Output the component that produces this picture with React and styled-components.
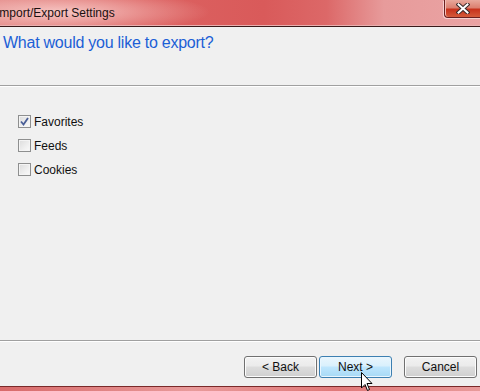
import styled, { createGlobalStyle } from 'styled-components';

const Global = createGlobalStyle`
    html, body {
        margin: 0;
        padding: 0;
        background: #f0f0f0;
    }
    body {
        font-family: "Liberation Sans", Arial, sans-serif;
        overflow: hidden;
    }
`;

const Window = styled.div`
    position: relative;
    width: 480px;
    height: 391px;
    display: flex;
    flex-direction: column;
    background: #f0f0f0;
    overflow: hidden;
`;

const TitleBar = styled.div`
    height: 26px;
    flex: none;
    display: flex;
    align-items: flex-start;
    justify-content: space-between;
    border-bottom: 1px solid #3a1a1a;
    box-shadow: inset 0 -1px 0 #e9b0b0;
    background:
        radial-gradient(ellipse 150px 22px at 60px 12px, rgba(255, 225, 222, 0.75), rgba(255, 225, 222, 0) 100%),
        linear-gradient(90deg, #e07e7c 0%, #dc6261 30%, #d95a5a 55%, #dc6868 68%, #e79b9b 80%, #eaa3a3 100%);
`;

const Title = styled.span`
    margin: 6px 0 0 -4px;
    font-size: 12px;
    color: #1a1010;
    white-space: nowrap;
`;

const CloseButton = styled.div`
    width: 36px;
    height: 17px;
    margin-right: -1px;
    display: flex;
    align-items: center;
    justify-content: center;
    border: 1px solid #6a2020;
    border-top: none;
    border-right: none;
    border-radius: 0 0 0 4px;
    box-shadow: inset 1px 0 0 #f4c0b8, -1px 1px 0 #f6d0d0;
    background: linear-gradient(180deg, #e8a89c 0%, #dc8070 45%, #c8321c 55%, #d45a3a 100%);
`;

const Header = styled.div`
    height: 59px;
    flex: none;
    padding: 7px 0 0 3px;
    box-sizing: border-box;
    border-bottom: 1px solid #a0a0a0;
`;

const Heading = styled.h1`
    margin: 0;
    font-weight: normal;
    font-size: 16px;
    letter-spacing: -0.25px;
    color: #1c5fd6;
`;

const Body = styled.div`
    flex: 1;
    display: flex;
    flex-direction: column;
    gap: 11px;
    padding: 28px 0 0 18px;
    border-top: 1px solid #ffffff;
    border-bottom: 1px solid #a0a0a0;
`;

const Option = styled.label`
    display: flex;
    align-items: center;
    gap: 3px;
    height: 13px;
    font-size: 12px;
    color: #101010;
`;

const Box = styled.span`
    width: 11px;
    height: 11px;
    border: 1px solid #8e8f8f;
    display: flex;
    align-items: center;
    justify-content: center;
    background: linear-gradient(135deg, #dcdcdc 0%, #f2f2f2 70%, #fafafa 100%);
    box-shadow: inset 0 0 0 1px #f4f4f4;
`;

const Footer = styled.div`
    height: 45px;
    flex: none;
    box-sizing: border-box;
    border-top: 1px solid #ffffff;
    display: flex;
    justify-content: flex-end;
    align-items: flex-start;
    padding: 14px 3px 0 0;
`;

const Button = styled.button`
    width: 73px;
    height: 22px;
    margin-left: ${p => p.$gap || 0}px;
    padding: 0;
    font-family: "Liberation Sans", Arial, sans-serif;
    font-size: 12px;
    color: #101010;
    border-radius: 3px;
    border: 1px solid ${p => (p.$hot ? '#3c7fb1' : '#707070')};
    box-shadow: inset 0 0 0 1px ${p => (p.$hot ? '#e9f6fe' : '#fcfcfc')};
    background: ${p =>
        p.$hot
            ? 'linear-gradient(180deg, #eaf6fd 0%, #d9f0fc 45%, #bee6fd 50%, #a7d9f5 100%)'
            : 'linear-gradient(180deg, #f2f2f2 0%, #ebebeb 45%, #dddddd 50%, #cfcfcf 100%)'};
`;

const Frame = styled.div`
    height: 4px;
    flex: none;
    border-top: 1px solid #7a2a2a;
    background: linear-gradient(90deg, #d86a6a 0%, #e89a9a 40%, #e07878 70%, #e89a9a 100%);
`;

const Cursor = styled.svg`
    position: absolute;
    left: 361px;
    top: 372px;
`;

const Check = () => (
    <svg width="9" height="9" viewBox="0 0 9 9">
        <path d="M1 4.5 L3.5 7.5 L8 1" fill="none" stroke="#4a5f97" strokeWidth="1.8" />
    </svg>
);

const options = [
    { label: 'Favorites', checked: true },
    { label: 'Feeds', checked: false },
    { label: 'Cookies', checked: false },
];

export default function App() {
    return (
        <Window>
            <Global />
            <TitleBar>
                <Title>Import/Export Settings</Title>
                <CloseButton>
                    <svg width="14" height="11" viewBox="0 0 14 11">
                        <path d="M2.5 1.5 L11.5 9.5 M11.5 1.5 L2.5 9.5" stroke="#3a2a2a" strokeWidth="4" strokeLinecap="square" />
                        <path d="M2.5 1.5 L11.5 9.5 M11.5 1.5 L2.5 9.5" stroke="#ffffff" strokeWidth="2" strokeLinecap="square" />
                    </svg>
                </CloseButton>
            </TitleBar>
            <Header>
                <Heading>What would you like to export?</Heading>
            </Header>
            <Body>
                {options.map(o => (
                    <Option key={o.label}>
                        <Box>{o.checked && <Check />}</Box>
                        {o.label}
                    </Option>
                ))}
            </Body>
            <Footer>
                <Button>&lt; Back</Button>
                <Button $hot $gap={2}>Next &gt;</Button>
                <Button $gap={12}>Cancel</Button>
            </Footer>
            <Frame />
            <Cursor width="13" height="20" viewBox="0 0 13 20">
                <path d="M0.5 0.5 L0.5 16 L4 12.5 L6.5 18.5 L8.5 17.5 L6 11.5 L11 11.5 Z" fill="#ffffff" stroke="#000000" strokeWidth="1" />
            </Cursor>
        </Window>
    );
}
